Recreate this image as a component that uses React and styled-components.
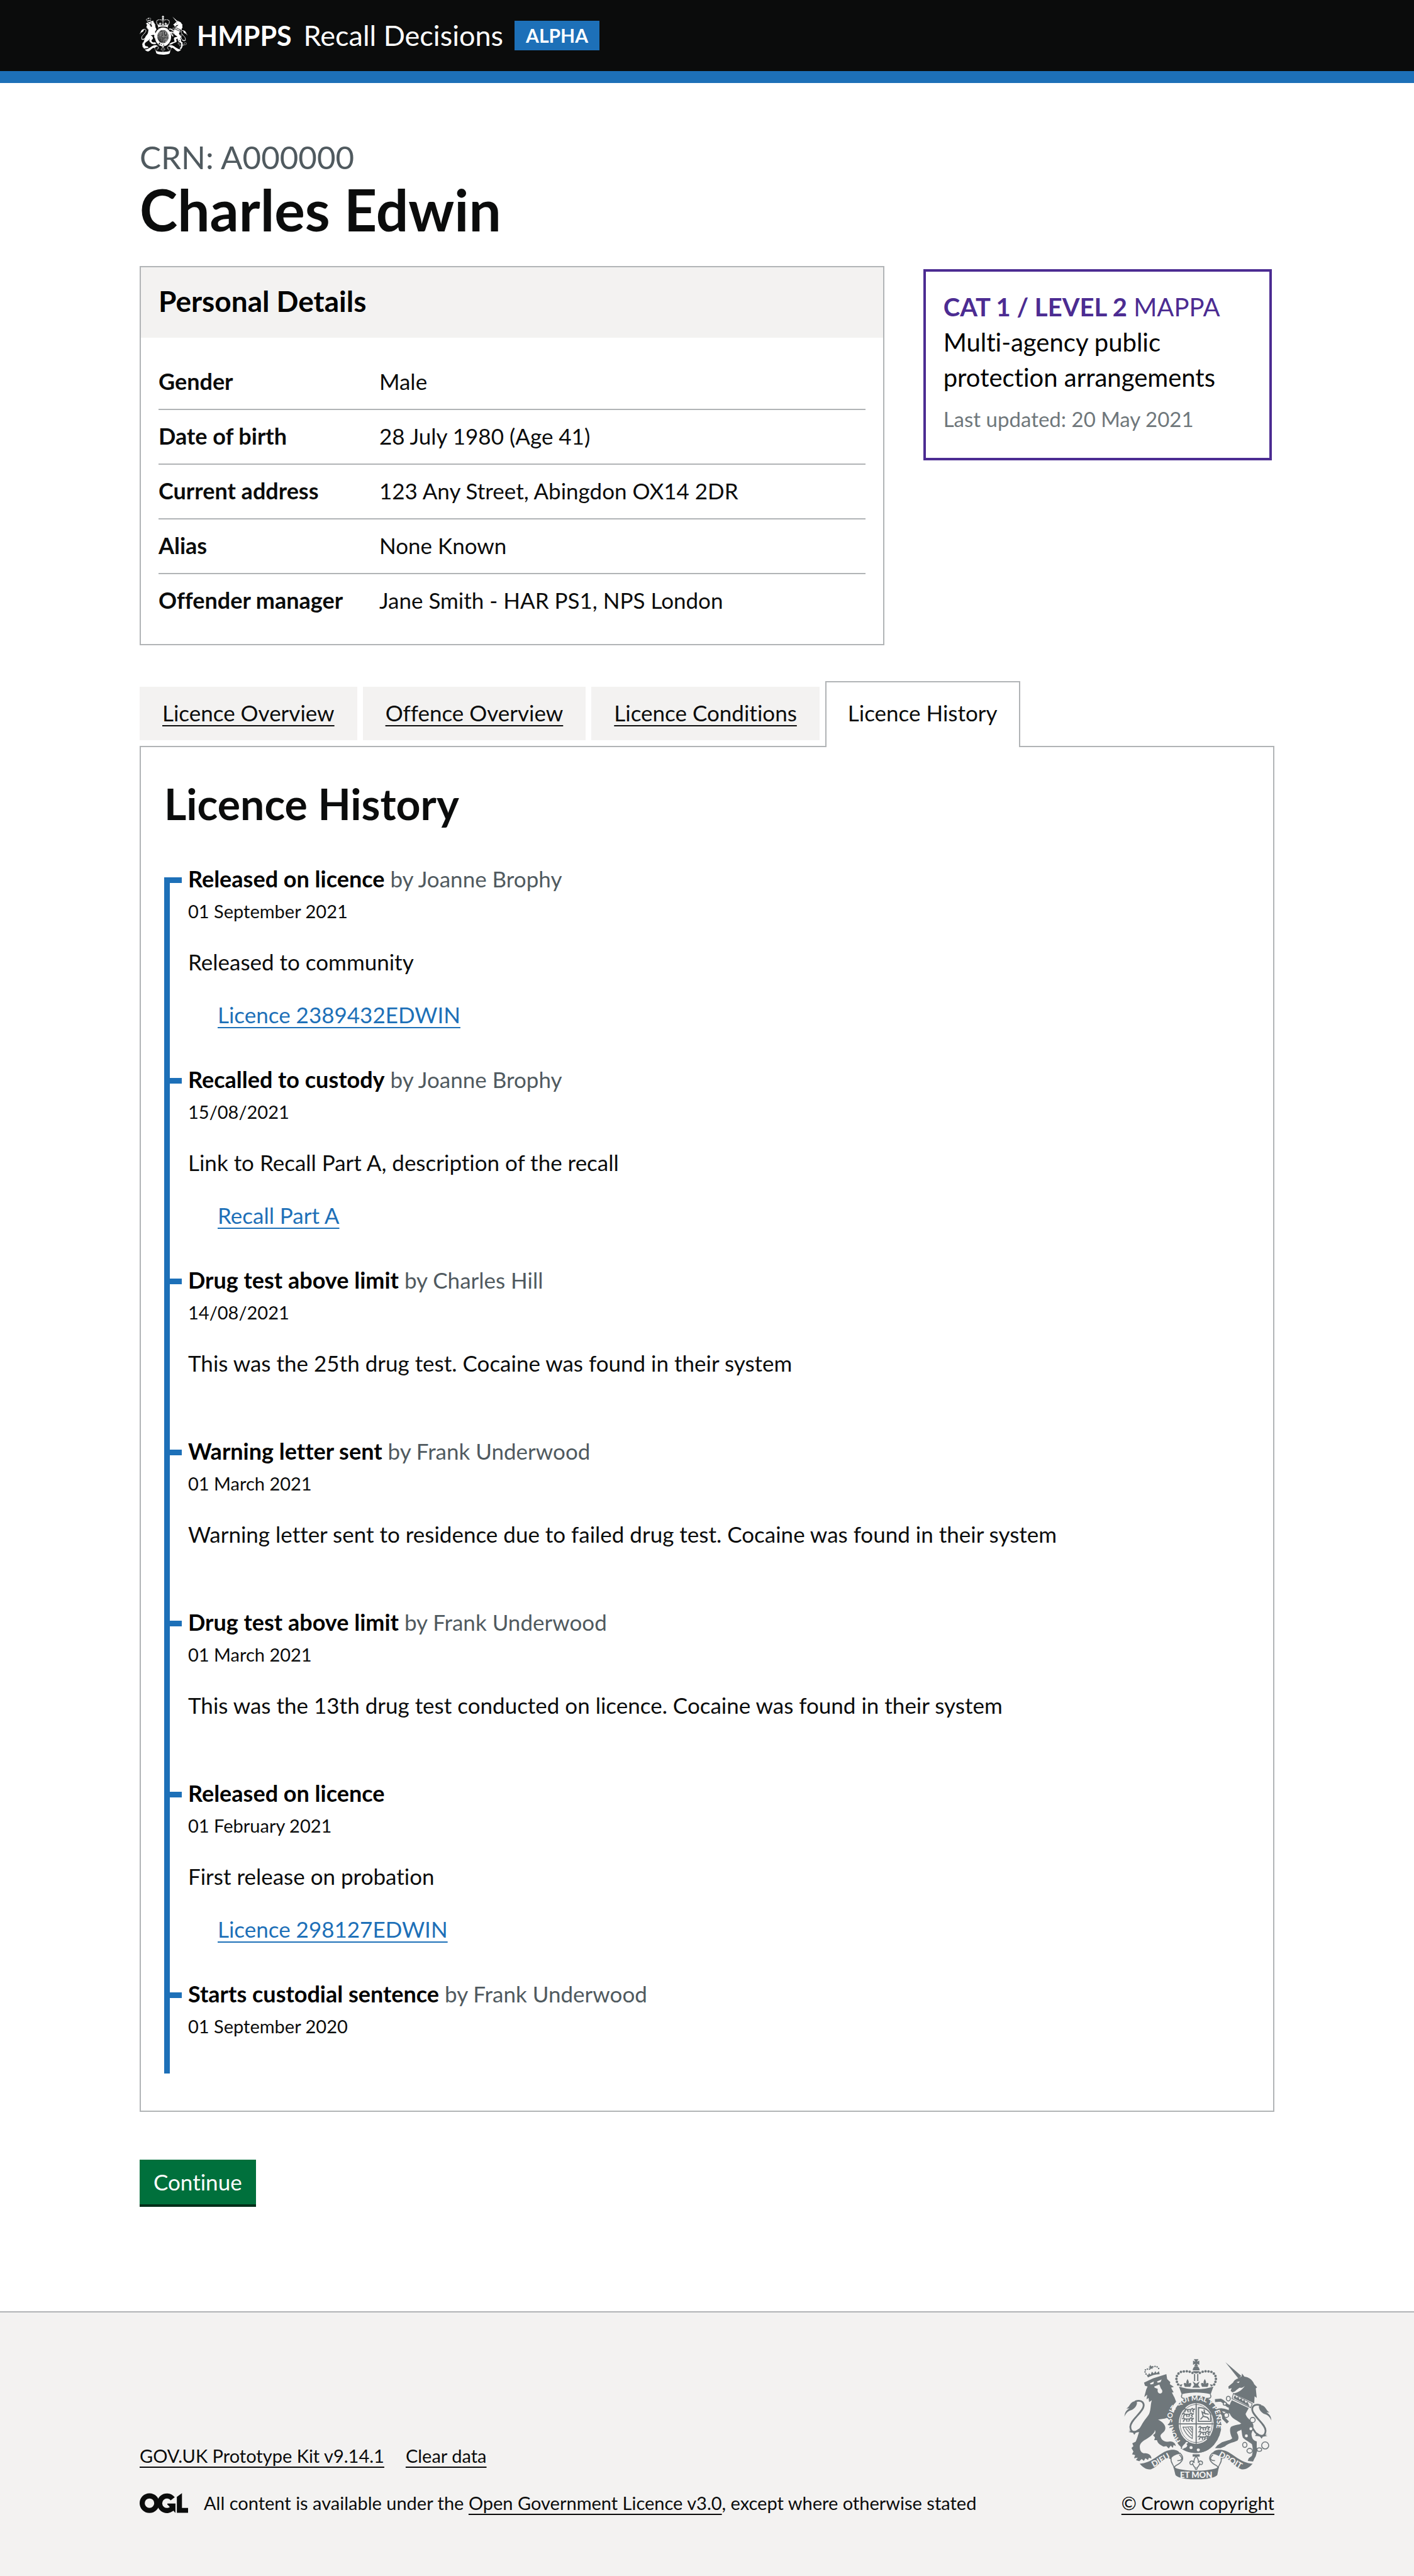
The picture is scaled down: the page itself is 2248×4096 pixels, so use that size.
import React from 'react';
import styled, { createGlobalStyle } from 'styled-components';

const color = {
  text: '#0b0c0c',
  secondary: '#505a5f',
  border: '#b1b4b6',
  pale: '#f3f2f1',
  blue: '#1d70b8',
  purple: '#4c2c92',
  grey: '#6f777b',
};

const GlobalStyle = createGlobalStyle`
  *, *::before, *::after { box-sizing: border-box; }
  body {
    margin: 0;
    background: #ffffff;
    color: ${color.text};
    font-family: Lato, "Noto Sans", sans-serif;
    font-size: 35px;
    line-height: 47px;
    font-variant-ligatures: none;
  }
  h1, h2, h3, p, ul, ol, dl, dd { margin: 0; padding: 0; }
  ul, ol { list-style: none; }
`;

const Wrapper = styled.div`
  width: calc(100% - 56px);
  max-width: 1804px;
  margin: 0 auto;
`;

const Link = styled.a`
  color: ${(p) => (p.$tone === 'blue' ? color.blue : color.text)};
  text-decoration: underline;
  text-decoration-thickness: 2px;
  text-underline-offset: 6px;
  text-decoration-skip-ink: none;
`;

/* Header */

const Header = styled.header`
  background: ${color.text};
  border-bottom: 19px solid ${color.blue};
`;

const HeaderRow = styled(Wrapper)`
  display: flex;
  align-items: center;
  height: 113px;
`;

const HeaderCrest = styled.div`
  width: 76px;
  margin-right: 15px;
  svg { display: block; width: 100%; }
`;

const Brand = styled.a`
  display: flex;
  align-items: baseline;
  gap: 19px;
  color: #ffffff;
  font-size: 45px;
  line-height: 54px;
  text-decoration: none;
`;

const Organisation = styled.strong`
  font-size: 43px;
`;

const PhaseTag = styled.strong`
  margin-left: 18px;
  padding: 0 18px;
  background: ${color.blue};
  color: #ffffff;
  font-size: 30px;
  line-height: 47px;
`;

/* Person heading */

const Main = styled.main`
  padding: 90px 0 170px;
`;

const Caption = styled.p`
  margin-bottom: 8px;
  color: ${color.secondary};
  font-size: 51px;
  line-height: 56px;
`;

const PersonName = styled.h1`
  margin-bottom: 43px;
  font-size: 91px;
  line-height: 94px;
`;

const Overview = styled.div`
  display: flex;
  align-items: flex-start;
`;

const Card = styled.section`
  flex: 0 0 calc(66.667% - 19px);
  border: 2px solid ${color.border};
`;

const CardTitle = styled.h2`
  padding: 26px 28px 30px;
  background: ${color.pale};
  color: #000000;
  font-size: 46px;
  line-height: 56px;
`;

const SummaryList = styled.dl`
  padding: 28px 28px 26px;
`;

const SummaryRow = styled.div`
  display: flex;
  padding: 18px 0 20px;
  & + & { border-top: 2px solid ${color.border}; }
`;

const SummaryKey = styled.dt`
  flex: 0 0 351px;
  font-size: 36px;
  font-weight: 700;
`;

const MappaBox = styled.aside`
  flex: 1;
  margin: 5px 4px 0 62px;
  padding: 28px 28px 40px;
  border: 4px solid ${color.purple};
  color: #000000;
  font-size: 40px;
  line-height: 56px;
`;

const MappaLevel = styled.p`
  color: ${color.purple};
`;

const MappaUpdated = styled.p`
  margin-top: 16px;
  color: ${color.grey};
  font-size: 33px;
  line-height: 44px;
`;

/* Tabs */

const TabList = styled.ul`
  display: flex;
  align-items: flex-end;
  gap: 9px;
  margin-top: 57px;
`;

const TabItem = styled.li`
  margin-bottom: ${(p) => (p.$active ? '-2px' : '9px')};
  padding: ${(p) => (p.$active ? '25px 34px 31px' : '18px 36px 20px')};
  background: ${(p) => (p.$active ? '#ffffff' : color.pale)};
  border: solid ${color.border};
  border-width: ${(p) => (p.$active ? '2px 2px 0' : '0')};
  a { text-decoration-line: ${(p) => (p.$active ? 'none' : 'underline')}; }
`;

const TabPanel = styled.section`
  padding: 54px 37px 59px;
  border: 2px solid ${color.border};
`;

const PanelTitle = styled.h2`
  margin-bottom: 81px;
  font-size: 68px;
  line-height: 72px;
`;

/* Timeline */

const Timeline = styled.ol`
  display: flex;
  flex-direction: column;
  border-left: 9px solid ${color.blue};
`;

const Event = styled.li`
  padding: 0 0 56px 29px;
  &:first-child { margin-top: -21px; }
`;

const EventHeader = styled.div`
  display: flex;
  align-items: center;
  gap: 10px;
  margin-left: -29px;
  color: ${color.secondary};
  &::before {
    content: "";
    width: 19px;
    height: 9px;
    margin-top: 4px;
    background: ${color.blue};
  }
`;

const EventTitle = styled.h3`
  display: inline;
  color: #000000;
  font-size: 36px;
`;

const EventDate = styled.p`
  margin-top: 9px;
  font-size: 29px;
  line-height: 38px;
`;

const EventText = styled.p`
  margin: 38px 0 37px;
`;

const EventDocument = styled.p`
  padding-left: 47px;
`;

const Button = styled.button`
  display: block;
  margin-top: 76px;
  padding: 12px 22px;
  border: 0;
  background: #00703c;
  box-shadow: 0 4px 0 #002d18;
  color: #ffffff;
  font: inherit;
`;

/* Footer */

const Footer = styled.footer`
  padding: 74px 0 97px;
  background: ${color.pale};
  border-top: 2px solid ${color.border};
  font-size: 29px;
  line-height: 38px;
`;

const FooterRow = styled(Wrapper)`
  display: flex;
  align-items: flex-end;
  justify-content: space-between;
`;

const FooterLinks = styled.ul`
  display: flex;
  gap: 34px;
  margin-bottom: 37px;
`;

const LicenceLine = styled.div`
  display: flex;
  align-items: center;
  gap: 25px;
  svg { width: 77px; height: 32px; }
`;

const Copyright = styled.div`
  display: flex;
  flex-direction: column;
  align-items: center;
  gap: 18px;
  svg { display: block; width: 235px; height: 192px; }
`;

function Crest({ ink, paper, detailed }) {
  const mirror = 'translate(1032 0) scale(-1 1)';
  const crownSide = (
    <>
      <path d="M424 224C404 190 420 158 454 157C478 155 490 160 500 166" fill="none" stroke={ink} strokeWidth="13" strokeLinecap="round" strokeDasharray="0 15" />
      <path d="M472 196C478 206 480 212 477 220C486 212 494 216 490 226L486 236H458L454 226C450 216 458 212 467 220C464 212 466 206 472 196Z" />
      <path d="M428 226L446 222L440 236Z" />
    </>
  );
  const scrollSide = (
    <>
      <path d="M228 628C288 626 328 576 368 562C400 550 430 560 434 578C412 580 390 592 388 606C350 582 332 640 286 656C262 660 244 646 228 628Z" />
      <path d="M388 600C384 628 402 630 404 652M432 572C462 600 444 622 412 638C400 646 406 652 420 660M430 582C456 606 436 614 420 612" fill="none" stroke={ink} strokeWidth="5" />
    </>
  );
  const tail = (
    <>
      <path d="M150 388C152 366 160 354 176 346L160 347C180 334 178 310 210 308C222 318 206 350 180 356C164 362 156 374 150 388Z" />
      <path d="M204 311C240 298 256 320 244 346C224 382 180 410 180 440C182 476 214 470 232 448L262 404" fill="none" stroke={ink} strokeWidth="9" />
      <path d="M166 452C182 468 206 466 222 450L234 466L210 468L200 481L194 470L170 466L180 464Z" />
    </>
  );
  const passantLion = 'M0 8L8 2L14 8H38L46 2L54 8L48 14L54 22M12 10L6 22M22 10L26 22M38 10L34 22M50 10L60 4';
  return (
    <svg viewBox="148 94 754 616" role="img" aria-label="Royal coat of arms" fill={ink}>
      {/* lion */}
      {tail}
      <path d="M250 214L296 193L364 171L368 196L384 212L382 222L402 236L388 240L401 264L392 265L405 290L414 312L402 326L390 350L408 386C424 404 430 428 425 452L412 456L405 448L396 456L391 444L378 446L384 434L370 430L380 420C384 408 376 398 366 394C350 402 336 398 322 404C350 416 366 440 356 458C346 474 328 478 336 494C342 510 356 516 372 516C392 510 410 520 412 538L401 532L397 547L386 536L376 550L364 538L350 541C336 534 320 526 316 508L302 508L306 494L296 482L306 474C312 460 302 452 305 462C298 478 276 494 252 508C234 520 226 532 229 548C230 564 238 572 250 575C272 572 288 586 288 602L275 598L270 609L257 600L249 614L238 604L226 615L209 610L218 597L199 600L205 584L189 580L196 566L186 548L196 538L190 524L207 516C216 500 222 470 232 446C242 414 262 398 276 374C286 350 282 328 290 304L276 314L273 292L263 300L266 276L251 288L261 250L268 234L255 230Z" />
      <path d="M280 218L300 209L298 221L284 224ZM316 209L340 198L334 212L320 215ZM302 234L328 224L336 244C348 256 344 270 332 270C320 268 318 258 320 246L304 240Z" fill={paper} />
      <path d="M270 188L262 172L270 176L276 166L284 174L290 158L300 168L308 156L314 166L326 156L330 172C306 172 288 178 270 188Z" />
      <path d="M260 170C246 148 262 142 282 146C290 128 324 124 328 152" fill="none" stroke={ink} strokeWidth="8" strokeLinecap="round" strokeDasharray="0 11" />
      <path d="M280 124L288 132L296 130L292 138L296 144L286 142L280 148L280 138L272 136L280 132Z" />
      <path d="M268 198C298 180 330 174 362 168" fill="none" stroke={paper} strokeWidth="4" />

      {/* unicorn */}
      <g transform="translate(1050 20) scale(-1 1)">{tail}</g>
      <path d="M665 110L746 180L732 194Z" />
      <path d="M732 192L748 182L750 168L762 184C786 186 804 202 812 222L827 238L820 244L825 292L814 284L812 320L706 270C726 266 748 256 764 232C752 242 744 242 738 240C720 250 716 262 700 264L692 256L697 242L682 246L680 234L704 214C708 204 718 196 732 192Z" />
      <path d="M722 212L738 208L732 217Z" fill={paper} />
      <path d="M706 270L802 322L794 342L699 296Z" fill={paper} stroke={ink} strokeWidth="4" />
      <path d="M706 294L714 278L722 292L732 286L736 300L748 294L752 308L762 302L768 318L778 312L788 336Z" />
      <path d="M698 304L784 344L768 374C774 396 792 404 802 418C816 438 802 458 798 476C800 504 812 512 825 514V546L829 556L820 590L812 604L806 617L779 614L784 600L800 588C808 562 804 542 800 528C784 514 762 506 754 494C748 480 750 464 746 454C736 462 724 460 724 470C734 488 734 502 726 510C706 520 684 520 662 540L640 549H612L624 534L648 518C668 510 692 508 700 498C690 480 684 450 694 440C710 430 736 430 746 424C730 408 698 400 688 374L682 350C684 332 690 318 698 304Z" />
      <path d="M696 336C672 340 660 310 642 304L612 306M696 366C676 366 664 346 630 354L654 378L656 396L678 418" fill="none" stroke={ink} strokeWidth="15" strokeLinejoin="round" />
      <g fill={paper} stroke={ink} strokeWidth="5">
        <ellipse cx="680" cy="296" rx="10" ry="12" />
        <circle cx="662" cy="322" r="8" />
        <circle cx="670" cy="380" r="12" />
        <circle cx="804" cy="405" r="13" />
        <circle cx="795" cy="450" r="10" />
        <circle cx="772" cy="486" r="10" />
      </g>
      <g fill="none" stroke={ink} strokeWidth="5">
        <ellipse cx="764" cy="532" rx="11" ry="13" />
        <ellipse cx="789" cy="562" rx="14" ry="12" />
        <ellipse cx="838" cy="556" rx="12" ry="9" />
        <circle cx="868" cy="535" r="18" />
      </g>

      {/* crown */}
      <path d="M504 95H528L520 108L532 102V124L520 118L526 131H506L512 118L500 124V102L512 108Z" />
      <path d="M498 152A18 22 0 0 1 534 152ZM500 156H532C530 164 524 168 516 168C508 168 502 164 500 156Z" />
      <path d="M508 170V206M524 170V206" stroke={ink} strokeWidth="6" />
      <path d="M498 208L516 220L534 208L526 226L536 240H496L506 226Z" />
      {crownSide}
      <g transform={mirror}>{crownSide}</g>
      <path d="M428 234C478 252 554 252 604 234L590 274C544 262 488 262 442 274Z" />
      <path d="M444 274C434 296 452 296 462 294M588 274C598 296 580 296 570 294" fill="none" stroke={ink} strokeWidth="5" />

      {/* garter and shield */}
      <ellipse cx="517" cy="427" rx="128" ry="147" />
      <ellipse cx="516" cy="423" rx="89" ry="104" fill={paper} />
      <path d="M516 320V526M427 425H605" stroke={ink} strokeWidth="6" />
      <ellipse cx="516" cy="423" rx="82" ry="97" fill="none" stroke={ink} strokeWidth="3" />
      <g fill="none" stroke={ink} strokeWidth="6">
        <path d={passantLion} transform="translate(450 344)" />
        <path d={passantLion} transform="translate(444 368)" />
        <path d={passantLion} transform="translate(444 392)" />
        <path d={passantLion} transform="translate(528 436)" />
        <path d={passantLion} transform="translate(528 460)" />
        <path d={passantLion} transform="translate(524 484)" />
        <path d="M528 342V412H590V374C580 356 566 344 528 342ZM538 402L552 386L546 364L560 372L556 352M552 386L574 392L582 404M560 372L580 376" />
        <path d="M448 440C470 446 486 436 498 440L496 500C476 490 456 466 448 440M462 446L494 486M474 444L496 470M486 442L496 456" strokeWidth="4" />
      </g>
      <path d="M446 518C490 560 548 560 590 530L582 552C556 578 480 582 440 550Z" />
      <circle cx="490" cy="546" r="8" fill={paper} />
      <circle cx="527" cy="558" r="8" fill={paper} />
      <path d="M440 552C440 530 456 532 462 516C476 510 482 524 470 528C478 536 470 550 452 552" fill={paper} stroke={ink} strokeWidth="5" />

      {/* scroll */}
      {scrollSide}
      <g transform={mirror}>{scrollSide}</g>
      <path d="M400 644C440 670 592 670 632 644L624 684C606 716 426 716 410 684Z" />
      <path d="M498 580H534V592H498Z" />
      <path d="M516 590C526 602 530 612 526 624C534 608 550 614 548 626C546 636 536 634 534 628C530 640 524 646 520 648C526 660 506 660 512 648C508 646 502 640 498 628C496 634 486 636 484 626C482 614 498 608 506 624C502 612 506 602 516 590Z" fill={paper} stroke={ink} strokeWidth="5" />

      {detailed && (
        <g fill={paper} fontFamily="Lato, sans-serif" fontWeight="900" textAnchor="middle">
          <path id="garter-line" d="M440 518C340 380 420 306 516 306C640 306 650 460 568 538" fill="none" />
          <text fontSize="36" textAnchor="start">
            <textPath href="#garter-line" startOffset="6">HONI SOIT QUI MAL Y PENSE</textPath>
          </text>
          <text fontSize="42" transform="translate(342 622) rotate(-30)">DIEU</text>
          <text fontSize="42" x="516" y="700">ET MON</text>
          <text fontSize="42" transform="translate(684 622) rotate(30)">DROIT</text>
        </g>
      )}
    </svg>
  );
}

function OglLogo() {
  return (
    <svg viewBox="0 0 246 101" role="img" aria-label="Open Government Licence" fill="none" stroke={color.text} strokeWidth="26">
      <circle cx="50" cy="51" r="37" />
      <path d="M168 29A37 37 0 1 0 170 71" />
      <path d="M141 53H182V101L141 58Z" fill={color.text} stroke="none" />
      <path d="M189 19L215 0V75H246V100H189Z" fill={color.text} stroke="none" />
    </svg>
  );
}

const details = [
  ['Gender', 'Male'],
  ['Date of birth', '28 July 1980 (Age 41)'],
  ['Current address', '123 Any Street, Abingdon OX14 2DR'],
  ['Alias', 'None Known'],
  ['Offender manager', 'Jane Smith - HAR PS1, NPS London'],
];

const tabs = ['Licence Overview', 'Offence Overview', 'Licence Conditions', 'Licence History'];

const events = [
  { title: 'Released on licence', by: 'Joanne Brophy', date: '01 September 2021', text: 'Released to community', doc: 'Licence 2389432EDWIN' },
  { title: 'Recalled to custody', by: 'Joanne Brophy', date: '15/08/2021', text: 'Link to Recall Part A, description of the recall', doc: 'Recall Part A' },
  { title: 'Drug test above limit', by: 'Charles Hill', date: '14/08/2021', text: 'This was the 25th drug test. Cocaine was found in their system' },
  { title: 'Warning letter sent', by: 'Frank Underwood', date: '01 March 2021', text: 'Warning letter sent to residence due to failed drug test. Cocaine was found in their system' },
  { title: 'Drug test above limit', by: 'Frank Underwood', date: '01 March 2021', text: 'This was the 13th drug test conducted on licence. Cocaine was found in their system' },
  { title: 'Released on licence', date: '01 February 2021', text: 'First release on probation', doc: 'Licence 298127EDWIN' },
  { title: 'Starts custodial sentence', by: 'Frank Underwood', date: '01 September 2020' },
];

export default function App() {
  return (
    <>
      <GlobalStyle />
      <Header>
        <HeaderRow>
          <HeaderCrest>
            <Crest ink="#ffffff" paper={color.text} />
          </HeaderCrest>
          <Brand href="#">
            <Organisation>HMPPS</Organisation>
            <span>Recall Decisions</span>
          </Brand>
          <PhaseTag>ALPHA</PhaseTag>
        </HeaderRow>
      </Header>

      <Wrapper>
        <Main>
          <Caption>CRN: A000000</Caption>
          <PersonName>Charles Edwin</PersonName>

          <Overview>
            <Card>
              <CardTitle>Personal Details</CardTitle>
              <SummaryList>
                {details.map(([key, value]) => (
                  <SummaryRow key={key}>
                    <SummaryKey>{key}</SummaryKey>
                    <dd>{value}</dd>
                  </SummaryRow>
                ))}
              </SummaryList>
            </Card>
            <MappaBox>
              <MappaLevel>
                <strong>CAT 1 / LEVEL 2</strong> MAPPA
              </MappaLevel>
              <p>Multi-agency public protection arrangements</p>
              <MappaUpdated>Last updated: 20 May 2021</MappaUpdated>
            </MappaBox>
          </Overview>

          <TabList>
            {tabs.map((tab) => (
              <TabItem key={tab} $active={tab === 'Licence History'}>
                <Link href="#">{tab}</Link>
              </TabItem>
            ))}
          </TabList>
          <TabPanel>
            <PanelTitle>Licence History</PanelTitle>
            <Timeline>
              {events.map((event, i) => (
                <Event key={i}>
                  <EventHeader>
                    <span>
                      <EventTitle>{event.title}</EventTitle>
                      {event.by && ` by ${event.by}`}
                    </span>
                  </EventHeader>
                  <EventDate>{event.date}</EventDate>
                  {event.text && <EventText>{event.text}</EventText>}
                  {event.doc && (
                    <EventDocument>
                      <Link href="#" $tone="blue">{event.doc}</Link>
                    </EventDocument>
                  )}
                </Event>
              ))}
            </Timeline>
          </TabPanel>

          <Button type="button">Continue</Button>
        </Main>
      </Wrapper>

      <Footer>
        <FooterRow>
          <div>
            <FooterLinks>
              <li><Link href="#">GOV.UK Prototype Kit v9.14.1</Link></li>
              <li><Link href="#">Clear data</Link></li>
            </FooterLinks>
            <LicenceLine>
              <OglLogo />
              <span>
                All content is available under the <Link href="#">Open Government Licence v3.0</Link>, except where otherwise stated
              </span>
            </LicenceLine>
          </div>
          <Copyright>
            <Crest ink={color.grey} paper={color.pale} detailed />
            <Link href="#">© Crown copyright</Link>
          </Copyright>
        </FooterRow>
      </Footer>
    </>
  );
}
